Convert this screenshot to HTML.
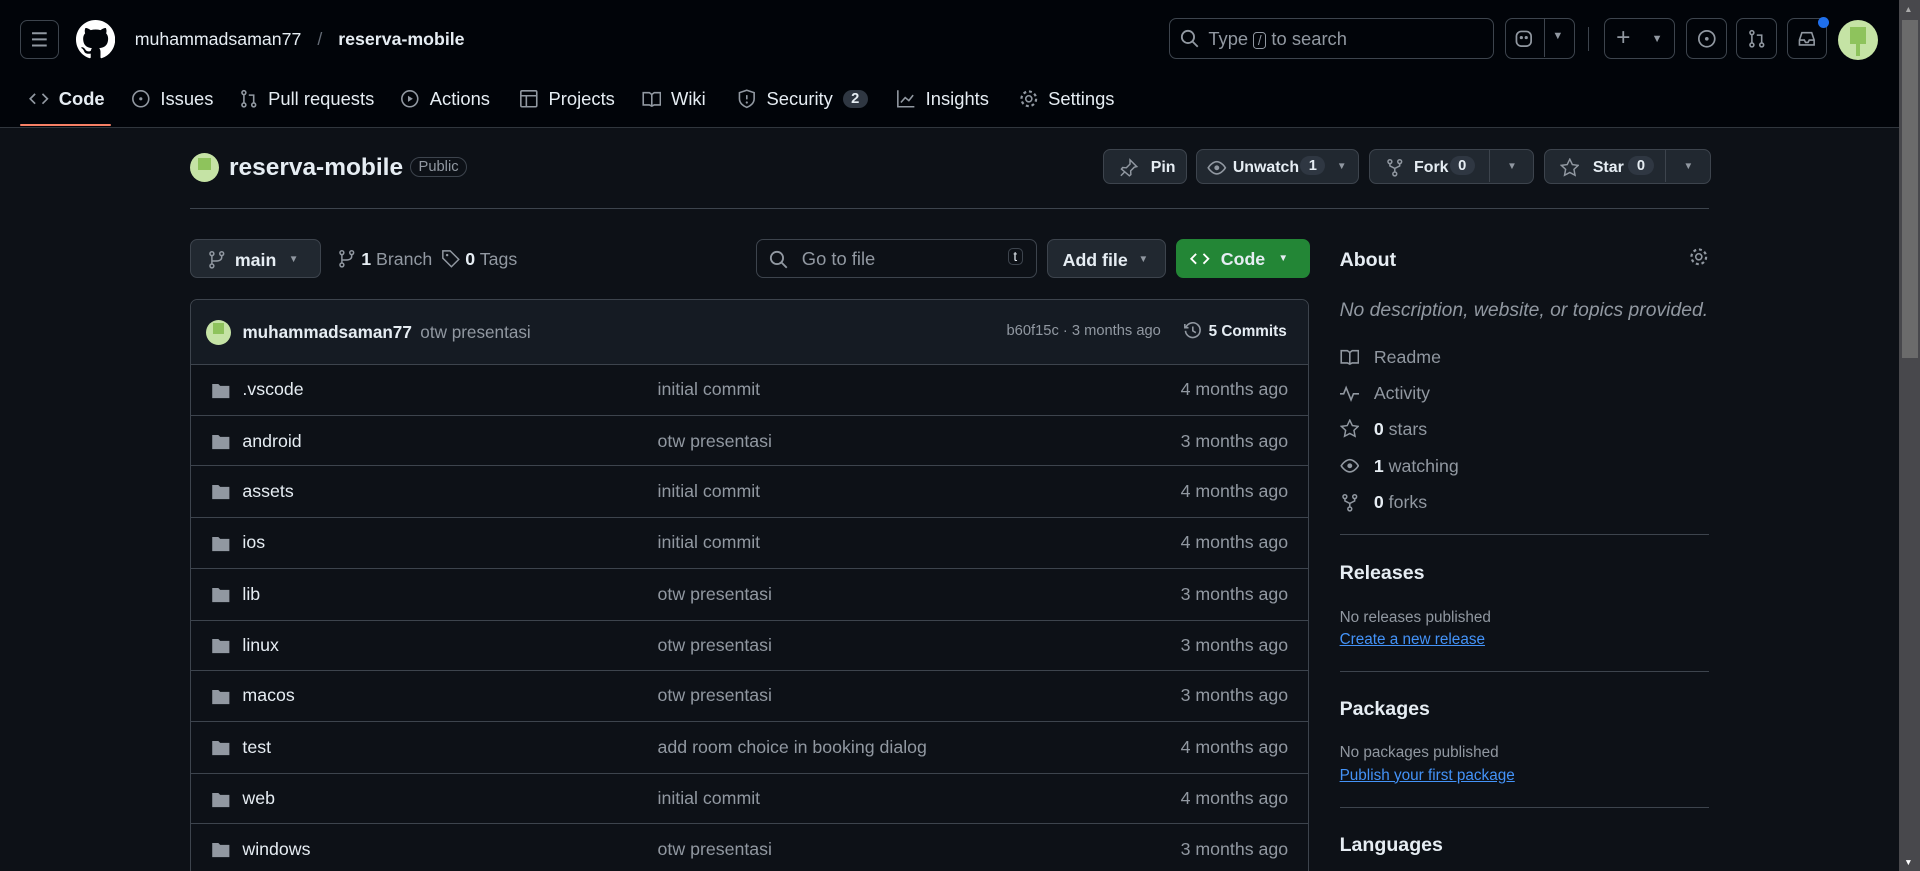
<!DOCTYPE html>
<html><head><meta charset="utf-8"><style>
html,body{margin:0;padding:0;background:#0d1117;overflow:hidden}
#w{zoom:1.22449;width:1568px;height:711px;position:relative;font-family:"Liberation Sans",sans-serif;color:#e6edf3;font-size:14px}
.a{position:absolute}
svg{display:block}
.hdr{left:0;top:0;width:1551px;height:104px;background:#010409;border-bottom:1px solid #30363d}
.btn{position:absolute;border:1px solid #3d444d;border-radius:6px;background:#212830;box-sizing:border-box}
.ib{position:absolute;border:1px solid #3d444d;border-radius:6px;box-sizing:border-box}
.tab{position:absolute;top:72px;font-size:15px;display:flex;align-items:center;gap:8px;color:#e6edf3}
.cnt{display:inline-block;background:#2f3742;border-radius:10px;padding:1px 7px;font-size:12px;font-weight:bold}
.row{position:absolute;left:155px;width:914px;height:41.7px;border-top:1px solid #3d444d;box-sizing:border-box;font-size:14.5px}
.row .n{position:absolute;left:43px;top:12px}
.row .m{position:absolute;left:382px;top:12px;color:#9198a1}
.row .d{position:absolute;right:17px;top:12px;color:#9198a1}
.row .f{position:absolute;left:17px;top:13px}
.sb{position:absolute;left:1094px;color:#9198a1;font-size:14.5px;display:flex;align-items:center;gap:12px}
.sb b{color:#e6edf3}
.hr{position:absolute;left:1094px;width:302px;height:1px;background:#3d444d}
h3{position:absolute;left:1094px;margin:0;font-size:16px;font-weight:bold}
.sm{position:absolute;left:1094px;font-size:12.5px;color:#9198a1}
.lk{position:absolute;left:1094px;font-size:12.5px;color:#4493f8;text-decoration:underline}
</style></head><body><div id="w">
<div class="a hdr"></div>
<div class="ib" style="left:16px;top:16px;width:32px;height:32px"><svg width="30" height="30" viewBox="0 0 30 30"><path d="M9 10h12M9 15h12M9 20h12" stroke="#9198a1" stroke-width="1.6"/></svg></div>
<svg class="a" style="left:62px;top:16px" width="32" height="32" viewBox="0 0 16 16"><path fill="#fff" d="M8 0C3.58 0 0 3.580 0 8c0 3.54 2.29 6.53 5.47 7.59.4.07.55-.17.55-.38 0-.19-.01-.82-.01-1.49-2.01.37-2.530-.49-2.69-.94-.09-.23-.48-.94-.82-1.130-.28-.15-.68-.52-.01-.53.63-.01 1.08.58 1.23.82.72 1.21 1.87.87 2.33.66.07-.52.28-.87.51-1.07-1.78-.2-3.64-.89-3.64-3.95 0-.87.31-1.59.82-2.15-.08-.2-.36-1.02.08-2.12 0 0 .67-.21 2.2.82.64-.18 1.32-.27 2-.27.68 0 1.36.09 2 .27 1.53-1.04 2.2-.82 2.2-.82.44 1.1.16 1.92.08 2.12.51.56.82 1.27.82 2.15 0 3.07-1.87 3.75-3.65 3.95.29.25.54.73.54 1.48 0 1.07-.01 1.93-.01 2.2 0 .21.15.46.55.38A8.013 8.013 0 0016 8c0-4.42-3.58-8-8-8z"/></svg>
<div class="a" style="left:110px;top:24px;font-size:14.5px">muhammadsaman77 <span style="color:#656c76;margin:0 9px">/</span> <b>reserva-mobile</b></div>
<div class="ib" style="left:955px;top:15px;width:265px;height:33px;color:#9198a1;font-size:15px"><svg class="a" style="left:8px;top:8px" width="16" height="16" viewBox="0 0 16 16"><circle cx="6.5" cy="6.5" r="5" fill="none" stroke="#9198a1" stroke-width="1.5"/><path d="M10 10l4.5 4.5" stroke="#9198a1" stroke-width="1.5"/></svg><span class="a" style="left:31px;top:7px">Type <span style="border:1px solid #9198a1;border-radius:3px;font-size:11px;padding:0 3px">/</span> to search</span></div>
<div class="ib" style="left:1229px;top:15px;width:57px;height:33px"><div class="a" style="left:31px;top:0;width:1px;height:31px;background:#3d444d"></div><svg class="a" style="left:7px;top:8px" width="16" height="16" viewBox="0 0 16 16"><rect x="2" y="2" width="12" height="12" rx="4" fill="none" stroke="#9198a1" stroke-width="1.4"/><circle cx="6" cy="7" r="1.3" fill="#9198a1"/><circle cx="10" cy="7" r="1.3" fill="#9198a1"/></svg><span class="a" style="left:38px;top:9px;color:#9198a1;font-size:9px">▼</span></div>
<div class="a" style="left:1297px;top:22px;width:1px;height:20px;background:#3d444d"></div>
<div class="ib" style="left:1310px;top:15px;width:58px;height:33px;color:#9198a1"><span class="a" style="left:9px;top:4px;font-size:20px">+</span><span class="a" style="left:38px;top:11px;font-size:9px">▼</span></div>
<div class="ib" style="left:1377px;top:15px;width:33px;height:33px"><svg class="a" style="left:8px;top:8px" width="16" height="16"><circle cx="8" cy="8" r="6.5" fill="none" stroke="#9198a1" stroke-width="1.4"/><circle cx="8" cy="8" r="1.5" fill="#9198a1"/></svg></div>
<div class="ib" style="left:1418px;top:15px;width:33px;height:33px"><svg class="a" style="left:8px;top:8px" width="16" height="16"><circle cx="4" cy="3" r="1.6" fill="none" stroke="#9198a1" stroke-width="1.3"/><circle cx="4" cy="13" r="1.6" fill="none" stroke="#9198a1" stroke-width="1.3"/><circle cx="12" cy="13" r="1.6" fill="none" stroke="#9198a1" stroke-width="1.3"/><path d="M4 5v6M12 11V5H8" stroke="#9198a1" stroke-width="1.3" fill="none"/></svg></div>
<div class="ib" style="left:1459px;top:15px;width:33px;height:33px"><svg class="a" style="left:8px;top:8px" width="16" height="16"><path d="M2 9l2-6h8l2 6v4H2z M2 9h4l1 2h2l1-2h4" stroke="#9198a1" stroke-width="1.3" fill="none"/></svg></div>
<div class="a" style="left:1485px;top:14px;width:9px;height:9px;border-radius:50%;background:#1f6feb"></div>
<div class="a" style="left:1501px;top:16px;width:33px;height:33px;border-radius:50%;background:#c5e3a5;overflow:hidden"><div class="a" style="left:10px;top:6px;width:13px;height:14px;background:#8ec35c"></div><div class="a" style="left:15px;top:6px;width:3px;height:24px;background:#8ec35c"></div></div>
<div class="tab" style="left:24px"><svg width="16" height="16"><path d="M5 4L1 8l4 4M11 4l4 4-4 4" stroke="#9198a1" stroke-width="1.4" fill="none"/></svg><b>Code</b></div>
<div class="a" style="left:16px;top:101px;width:75px;height:2px;background:#f78166;border-radius:2px"></div>
<div class="tab" style="left:107px"><svg width="16" height="16"><circle cx="8" cy="8" r="6.5" fill="none" stroke="#9198a1" stroke-width="1.3"/><circle cx="8" cy="8" r="1.3" fill="#9198a1"/></svg>Issues</div>
<div class="tab" style="left:195px"><svg width="16" height="16"><circle cx="4" cy="3" r="1.6" fill="none" stroke="#9198a1" stroke-width="1.3"/><circle cx="4" cy="13" r="1.6" fill="none" stroke="#9198a1" stroke-width="1.3"/><circle cx="12" cy="13" r="1.6" fill="none" stroke="#9198a1" stroke-width="1.3"/><path d="M4 5v6M12 11V5H8" stroke="#9198a1" stroke-width="1.3" fill="none"/></svg>Pull requests</div>
<div class="tab" style="left:327px"><svg width="16" height="16"><circle cx="8" cy="8" r="6.5" fill="none" stroke="#9198a1" stroke-width="1.3"/><path d="M6.5 5.5v5l4-2.5z" fill="#9198a1"/></svg>Actions</div>
<div class="tab" style="left:424px"><svg width="16" height="16"><rect x="1.5" y="1.5" width="13" height="13" rx="1" fill="none" stroke="#9198a1" stroke-width="1.3"/><path d="M1.5 5.5h13M6 5.5v9" stroke="#9198a1" stroke-width="1.3"/></svg>Projects</div>
<div class="tab" style="left:524px"><svg width="16" height="16"><path d="M1 3h5l2 1.5L10 3h5v10h-5l-2 1-2-1H1z M8 4.5V14" stroke="#9198a1" stroke-width="1.3" fill="none"/></svg>Wiki</div>
<div class="tab" style="left:602px"><svg width="16" height="16"><path d="M8 1l6 2v5c0 3.5-3 6-6 7-3-1-6-3.5-6-7V3z M8 5v3.5" stroke="#9198a1" stroke-width="1.3" fill="none"/><circle cx="8" cy="11" r=".9" fill="#9198a1"/></svg>Security <span class="cnt">2</span></div>
<div class="tab" style="left:732px"><svg width="16" height="16"><path d="M1.5 1v13.5H15M4 11l3.5-4 3 2.5L14 5" stroke="#9198a1" stroke-width="1.3" fill="none"/></svg>Insights</div>
<div class="tab" style="left:832px"><svg width="16" height="16"><circle cx="8" cy="8" r="2.5" fill="none" stroke="#9198a1" stroke-width="1.3"/><circle cx="8" cy="8" r="6" fill="none" stroke="#9198a1" stroke-width="1.8" stroke-dasharray="2.4 2.3"/></svg>Settings</div>

<div class="a" style="left:155px;top:125px;width:24px;height:24px;border-radius:50%;background:#c5e3a5;overflow:hidden"><div class="a" style="left:7px;top:4px;width:10px;height:10px;background:#8ec35c"></div></div>
<div class="a" style="left:187px;top:126px;font-size:20px;font-weight:bold">reserva-mobile</div>
<div class="a" style="left:335px;top:128px;border:1px solid #3d444d;border-radius:10px;padding:1px 6px;font-size:12px;color:#9198a1">Public</div>
<div class="btn" style="left:901px;top:122px;width:68px;height:28px;font-size:13px;font-weight:bold"><svg class="a" style="left:12px;top:6px" width="16" height="16"><path d="M9 1.5l5.5 5.5-2 .5-3 3 .2 3-1.2 1L2 9l1-1.2 3 .2 3-3z M5 11l-3.5 3.5" fill="none" stroke="#9198a1" stroke-width="1.2"/></svg><span class="a" style="left:38px;top:7px">Pin</span></div>
<div class="btn" style="left:977px;top:122px;width:133px;height:28px;font-size:13px;font-weight:bold"><svg class="a" style="left:8px;top:6px" width="16" height="16"><path d="M1 8s3-5 7-5 7 5 7 5-3 5-7 5-7-5-7-5z" fill="none" stroke="#9198a1" stroke-width="1.3"/><circle cx="8" cy="8" r="2" fill="#9198a1"/></svg><span class="a" style="left:29px;top:7px">Unwatch</span><span class="a cnt" style="left:84px;top:5px">1</span><span class="a" style="left:114px;top:9px;font-size:8px;color:#9198a1">▼</span></div>
<div class="btn" style="left:1118px;top:122px;width:135px;height:28px;font-size:13px;font-weight:bold"><svg class="a" style="left:12px;top:6px" width="16" height="16"><circle cx="4" cy="3" r="1.6" fill="none" stroke="#9198a1" stroke-width="1.2"/><circle cx="12" cy="3" r="1.6" fill="none" stroke="#9198a1" stroke-width="1.2"/><circle cx="8" cy="13" r="1.6" fill="none" stroke="#9198a1" stroke-width="1.2"/><path d="M4 4.6V6.5l4 2 4-2V4.6M8 8.5v3" fill="none" stroke="#9198a1" stroke-width="1.2"/></svg><span class="a" style="left:36px;top:7px">Fork</span><span class="a cnt" style="left:65px;top:5px">0</span><div class="a" style="left:97px;top:0;width:1px;height:26px;background:#3d444d"></div><span class="a" style="left:112px;top:9px;font-size:8px;color:#9198a1">▼</span></div>
<div class="btn" style="left:1261px;top:122px;width:136px;height:28px;font-size:13px;font-weight:bold"><svg class="a" style="left:12px;top:6px" width="16" height="16"><path d="M8 1l2.1 4.4 4.8.6-3.5 3.3.9 4.8L8 11.8 3.7 14.1l.9-4.8L1.1 6l4.8-.6z" fill="none" stroke="#9198a1" stroke-width="1.2"/></svg><span class="a" style="left:39px;top:7px">Star</span><span class="a cnt" style="left:68px;top:5px">0</span><div class="a" style="left:98px;top:0;width:1px;height:26px;background:#3d444d"></div><span class="a" style="left:113px;top:9px;font-size:8px;color:#9198a1">▼</span></div>
<div class="a" style="left:155px;top:170px;width:1241px;height:1px;background:#3d444d"></div>

<div class="btn" style="left:155px;top:195px;width:107px;height:32px;font-size:14.5px;font-weight:bold"><svg class="a" style="left:13px;top:8px" width="16" height="16"><circle cx="4" cy="3" r="1.6" fill="none" stroke="#9198a1" stroke-width="1.2"/><circle cx="12" cy="3" r="1.6" fill="none" stroke="#9198a1" stroke-width="1.2"/><circle cx="4" cy="13" r="1.6" fill="none" stroke="#9198a1" stroke-width="1.2"/><path d="M4 4.6v6.8M12 4.6V6c0 2-2 3-5 3H4" fill="none" stroke="#9198a1" stroke-width="1.2"/></svg><span class="a" style="left:36px;top:8px">main</span><span class="a" style="left:80px;top:12px;font-size:8px;color:#9198a1">▼</span></div>
<svg class="a" style="left:275px;top:203px" width="16" height="16"><circle cx="4" cy="3" r="1.6" fill="none" stroke="#9198a1" stroke-width="1.2"/><circle cx="12" cy="3" r="1.6" fill="none" stroke="#9198a1" stroke-width="1.2"/><circle cx="4" cy="13" r="1.6" fill="none" stroke="#9198a1" stroke-width="1.2"/><path d="M4 4.6v6.8M12 4.6V6c0 2-2 3-5 3H4" fill="none" stroke="#9198a1" stroke-width="1.2"/></svg>
<div class="a" style="left:295px;top:203px;font-size:14.5px;color:#9198a1"><b style="color:#e6edf3">1</b> Branch</div>
<svg class="a" style="left:360px;top:203px" width="16" height="16"><path d="M1.5 1.5h6l7 7-6 6-7-7z" fill="none" stroke="#9198a1" stroke-width="1.2"/><circle cx="5" cy="5" r="1" fill="#9198a1"/></svg>
<div class="a" style="left:380px;top:203px;font-size:14.5px;color:#9198a1"><b style="color:#e6edf3">0</b> Tags</div>
<div class="ib" style="left:617px;top:195px;width:230px;height:32px;color:#9198a1;font-size:15px"><svg class="a" style="left:10px;top:8px" width="16" height="16"><circle cx="6.5" cy="6.5" r="5" fill="none" stroke="#9198a1" stroke-width="1.5"/><path d="M10 10l4.5 4.5" stroke="#9198a1" stroke-width="1.5"/></svg><span class="a" style="left:37px;top:7px">Go to file</span><span class="a" style="left:205px;top:7px;border:1px solid #3d444d;border-radius:4px;font-size:11px;padding:0 4px;color:#e6edf3">t</span></div>
<div class="btn" style="left:855px;top:195px;width:97px;height:32px;font-size:14.5px;font-weight:bold"><span class="a" style="left:12px;top:8px">Add file</span><span class="a" style="left:74px;top:12px;font-size:8px;color:#9198a1">▼</span></div>
<div class="a" style="left:960px;top:195px;width:110px;height:32px;border-radius:6px;background:#238636;font-size:14.5px;font-weight:bold"><svg class="a" style="left:12px;top:8px" width="16" height="16"><path d="M5 4L1 8l4 4M11 4l4 4-4 4" stroke="#fff" stroke-width="1.5" fill="none"/></svg><span class="a" style="left:37px;top:8px">Code</span><span class="a" style="left:84px;top:12px;font-size:8px">▼</span></div>

<div class="a" style="left:155px;top:244px;width:914px;height:480px;border:1px solid #3d444d;border-radius:6px;box-sizing:border-box"></div>
<div class="a" style="left:156px;top:245px;width:912px;height:52px;background:#151b23;border-radius:6px 6px 0 0"></div>
<div class="a" style="left:168px;top:261px;width:21px;height:21px;border-radius:50%;background:#c5e3a5;overflow:hidden"><div class="a" style="left:6px;top:3px;width:9px;height:9px;background:#8ec35c"></div></div>
<div class="a" style="left:198px;top:263px;font-size:14px"><b>muhammadsaman77</b> <span style="color:#9198a1;margin-left:3px">otw presentasi</span></div>
<div class="a" style="left:822px;top:264px;font-size:12px;color:#9198a1">b60f15c · 3 months ago</div>
<svg class="a" style="left:966px;top:262px" width="16" height="16"><path d="M2.5 5A6 6 0 1 1 2 8M1.5 2.5V5.5h3M8 4.5V8l2.5 1.5" fill="none" stroke="#9198a1" stroke-width="1.3"/></svg>
<div class="a" style="left:987px;top:264px;font-size:12.5px;font-weight:bold">5 Commits</div>
<div class="row" style="top:297px"><svg class="f" width="16" height="16"><path d="M1 2.5h5l1.5 1.5H15v10H1z" fill="#9198a1"/></svg><span class="n">.vscode</span><span class="m">initial commit</span><span class="d">4 months ago</span></div>
<div class="row" style="top:339px"><svg class="f" width="16" height="16"><path d="M1 2.5h5l1.5 1.5H15v10H1z" fill="#9198a1"/></svg><span class="n">android</span><span class="m">otw presentasi</span><span class="d">3 months ago</span></div>
<div class="row" style="top:380px"><svg class="f" width="16" height="16"><path d="M1 2.5h5l1.5 1.5H15v10H1z" fill="#9198a1"/></svg><span class="n">assets</span><span class="m">initial commit</span><span class="d">4 months ago</span></div>
<div class="row" style="top:422px"><svg class="f" width="16" height="16"><path d="M1 2.5h5l1.5 1.5H15v10H1z" fill="#9198a1"/></svg><span class="n">ios</span><span class="m">initial commit</span><span class="d">4 months ago</span></div>
<div class="row" style="top:464px"><svg class="f" width="16" height="16"><path d="M1 2.5h5l1.5 1.5H15v10H1z" fill="#9198a1"/></svg><span class="n">lib</span><span class="m">otw presentasi</span><span class="d">3 months ago</span></div>
<div class="row" style="top:506px"><svg class="f" width="16" height="16"><path d="M1 2.5h5l1.5 1.5H15v10H1z" fill="#9198a1"/></svg><span class="n">linux</span><span class="m">otw presentasi</span><span class="d">3 months ago</span></div>
<div class="row" style="top:547px"><svg class="f" width="16" height="16"><path d="M1 2.5h5l1.5 1.5H15v10H1z" fill="#9198a1"/></svg><span class="n">macos</span><span class="m">otw presentasi</span><span class="d">3 months ago</span></div>
<div class="row" style="top:589px"><svg class="f" width="16" height="16"><path d="M1 2.5h5l1.5 1.5H15v10H1z" fill="#9198a1"/></svg><span class="n">test</span><span class="m">add room choice in booking dialog</span><span class="d">4 months ago</span></div>
<div class="row" style="top:631px"><svg class="f" width="16" height="16"><path d="M1 2.5h5l1.5 1.5H15v10H1z" fill="#9198a1"/></svg><span class="n">web</span><span class="m">initial commit</span><span class="d">4 months ago</span></div>
<div class="row" style="top:672px"><svg class="f" width="16" height="16"><path d="M1 2.5h5l1.5 1.5H15v10H1z" fill="#9198a1"/></svg><span class="n">windows</span><span class="m">otw presentasi</span><span class="d">3 months ago</span></div>

<h3 style="top:203px">About</h3>
<svg class="a" style="left:1379px;top:202px" width="16" height="16"><circle cx="8" cy="8" r="2.5" fill="none" stroke="#9198a1" stroke-width="1.3"/><circle cx="8" cy="8" r="6" fill="none" stroke="#9198a1" stroke-width="1.8" stroke-dasharray="2.4 2.3"/></svg>
<div class="a" style="left:1094px;top:244px;font-size:15.8px;font-style:italic;color:#9198a1">No description, website, or topics provided.</div>
<div class="sb" style="top:283px"><svg width="16" height="16"><path d="M1 3h5l2 1.5L10 3h5v10h-5l-2 1-2-1H1z M8 4.5V14" stroke="#9198a1" stroke-width="1.3" fill="none"/></svg>Readme</div>
<div class="sb" style="top:313px"><svg width="16" height="16"><path d="M0 8h3l2-5 4 10 2-5h5" stroke="#9198a1" stroke-width="1.3" fill="none"/></svg>Activity</div>
<div class="sb" style="top:342px"><svg width="16" height="16"><path d="M8 1l2.1 4.4 4.8.6-3.5 3.3.9 4.8L8 11.8 3.7 14.1l.9-4.8L1.1 6l4.8-.6z" fill="none" stroke="#9198a1" stroke-width="1.2"/></svg><span><b>0</b> stars</span></div>
<div class="sb" style="top:372px"><svg width="16" height="16"><path d="M1 8s3-5 7-5 7 5 7 5-3 5-7 5-7-5-7-5z" fill="none" stroke="#9198a1" stroke-width="1.3"/><circle cx="8" cy="8" r="2" fill="#9198a1"/></svg><span><b>1</b> watching</span></div>
<div class="sb" style="top:402px"><svg width="16" height="16"><circle cx="4" cy="3" r="1.6" fill="none" stroke="#9198a1" stroke-width="1.2"/><circle cx="12" cy="3" r="1.6" fill="none" stroke="#9198a1" stroke-width="1.2"/><circle cx="8" cy="13" r="1.6" fill="none" stroke="#9198a1" stroke-width="1.2"/><path d="M4 4.6V6.5l4 2 4-2V4.6M8 8.5v3" fill="none" stroke="#9198a1" stroke-width="1.2"/></svg><span><b>0</b> forks</span></div>
<div class="hr" style="top:436px"></div>
<h3 style="top:459px">Releases</h3>
<div class="sm" style="top:497px">No releases published</div>
<div class="lk" style="top:515px">Create a new release</div>
<div class="hr" style="top:548px"></div>
<h3 style="top:570px">Packages</h3>
<div class="sm" style="top:608px">No packages published</div>
<div class="lk" style="top:626px">Publish your first package</div>
<div class="hr" style="top:659px"></div>
<h3 style="top:681px">Languages</h3>

<div class="a" style="left:1551px;top:0;width:17px;height:711px;background:#48484c"></div>
<div class="a" style="left:1553px;top:16px;width:13px;height:276px;background:#6b6b6b"></div>
<div class="a" style="left:1555px;top:3px;font-size:7px;color:#aaa">▲</div>
<div class="a" style="left:1555px;top:700px;font-size:7px;color:#fff">▼</div>
</div></body></html>
